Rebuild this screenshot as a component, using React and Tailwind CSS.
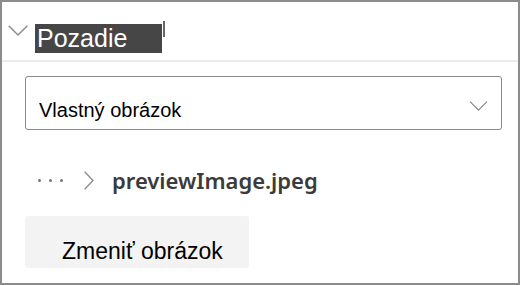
import React from "react";

function ChevronDown({ className }) {
  return (
    <svg className={className} viewBox="0 0 20 11" fill="none">
      <path d="M0.7 0.7 L10 10 L19.3 0.7" stroke="#8a8a8a" strokeWidth="1.4" />
    </svg>
  );
}

export default function App() {
  return (
    <div className="w-[520px] h-[286px] bg-white" style={{ fontFamily: '"Liberation Sans", Arial, sans-serif' }}>
      <div className="w-[520px] h-[285px] border-2 border-[#8c8c8c] flex flex-col">
        {/* Header */}
        <div className="h-[60px] border-b-2 border-[#ececec] flex items-start pt-[21px] pl-[6px]">
          <ChevronDown className="w-[20px] h-[11px] mt-[2px]" />
          <div className="ml-[7px] mt-[1px] w-[127px] h-[29px] bg-[#464646] text-white text-[25px] leading-[29px] pl-[2px]">
            Pozadie
          </div>
          <div className="ml-[1px] mt-[-2px] w-[2px] h-[16px] bg-[#666]" />
        </div>

        {/* Dropdown */}
        <div className="pl-[23px] pr-[16px] pt-[14px]">
          <div className="h-[54px] border border-[#8a8a8a] rounded-[3px] flex items-center justify-between pl-[12px] pr-[13px]">
            <div className="mt-[14px] h-[26px] text-black text-[20px] leading-[26px] pl-[1px]">
              Vlastný obrázok
            </div>
            <ChevronDown className="w-[19px] h-[10px] mt-[6px]" />
          </div>
        </div>

        {/* Breadcrumb */}
        <div className="flex items-center pl-[36px] pt-[31px] h-[70px]">
          <div className="flex gap-[8px] items-center">
            <span className="w-[3px] h-[3px] rounded-full bg-[#777]" />
            <span className="w-[3px] h-[3px] rounded-full bg-[#777]" />
            <span className="w-[3px] h-[3px] rounded-full bg-[#777]" />
          </div>
          <svg className="ml-[21px] w-[10px] h-[19px]" viewBox="0 0 10 19" fill="none">
            <path d="M0.7 0.7 L9 9.5 L0.7 18.3" stroke="#8a8a8a" strokeWidth="1.3" />
          </svg>
          <span
            className="ml-[18px] text-[22px] font-semibold text-[#3b3b3b]"
            style={{ fontFamily: '"Noto Sans", "Open Sans", sans-serif' }}
          >
            previewImage.jpeg
          </span>
        </div>

        {/* Button */}
        <div className="px-[23px] pt-[16px]">
          <div className="w-[224px] h-[52px] bg-[#f3f3f3] rounded-[3px] flex items-center pl-[37px]">
            <span className="mt-[18px] text-black text-[23px] leading-[28px] whitespace-nowrap">
              Zmeniť obrázok
            </span>
          </div>
        </div>
      </div>
    </div>
  );
}
